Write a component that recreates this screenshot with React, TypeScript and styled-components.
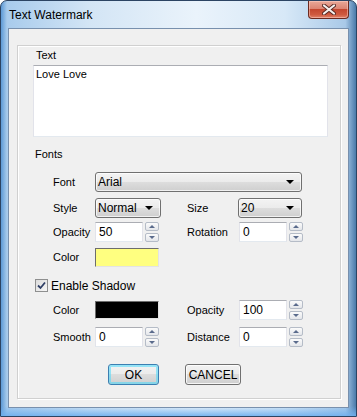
import React from 'react';
import styled, { createGlobalStyle } from 'styled-components';

const GlobalStyle = createGlobalStyle`
  html, body {
    margin: 0;
    padding: 0;
    background: #ffffff;
  }
  body {
    font-family: "Liberation Sans", Arial, sans-serif;
    font-size: 11px;
    color: #000;
  }
`;

const Window = styled.div`
  width: 357px;
  height: 417px;
  box-sizing: border-box;
  display: flex;
  flex-direction: column;
  border: 1px solid #2c4463;
  border-radius: 7px 7px 0 0;
  padding: 0 7px 8px 7px;
  background:
    linear-gradient(to bottom, rgba(111, 176, 238, 0) 0, rgba(111, 176, 238, 0) 405px, #6fb0ee 416px),
    linear-gradient(to right, #5d9ad6 0, #a8cbec 6px, #d3e5f5 25%, #eaf3fb 55%, #d7e8f7 80%, #a9c9e8 97%, #4a7aaa 100%);
  overflow: hidden;
`;

const TitleBar = styled.div`
  height: 27px;
  display: flex;
  align-items: flex-start;
  justify-content: space-between;
`;

const Title = styled.div`
  margin-top: 7px;
  padding-left: 1px;
  font-size: 12px;
  line-height: 14px;
  color: #000;
`;

const CloseButton = styled.div`
  width: 41px;
  height: 18px;
  box-sizing: border-box;
  border: 1px solid #6b2a20;
  border-top: none;
  border-radius: 0 0 4px 4px;
  background: linear-gradient(to bottom, #e9a898 0%, #dc8573 45%, #c4472f 50%, #cf5a40 80%, #e0836a 100%);
  display: flex;
  align-items: center;
  justify-content: center;
  box-shadow: inset 0 0 0 1px rgba(255, 210, 200, 0.5);
`;

const Client = styled.div`
  flex: 1;
  display: flex;
  border: 1px solid #7890ad;
  background: #f0f0f0;
  padding: 16px 7px 8px 8px;
`;

const Panel = styled.div`
  flex: 1;
  border: 1px solid #d0d0d0;
  box-shadow: inset 1px 1px 0 #ffffff, 1px 1px 0 #ffffff;
  padding: 3px 0 0 15px;
`;

const SectionLabel = styled.div<{ $top?: number; $left?: number }>`
  margin-top: ${p => p.$top ?? 0}px;
  margin-left: ${p => p.$left ?? 3}px;
  line-height: 13px;
`;

const TextBox = styled.div`
  margin-top: 3px;
  width: 295px;
  height: 72px;
  box-sizing: border-box;
  background: #fff;
  border: 1px solid #e2e3ea;
  border-top-color: #abadb3;
  border-bottom-color: #e3e9ef;
  padding: 2px 2px;
  line-height: 13px;
`;

const FieldRow = styled.div<{ $top: number; $height?: number }>`
  display: flex;
  align-items: center;
  height: ${p => p.$height ?? 20}px;
  margin-top: ${p => p.$top}px;
  margin-left: 20px;
`;

const Label = styled.div<{ $width: number }>`
  width: ${p => p.$width}px;
  flex-shrink: 0;
  line-height: 13px;
`;

const Cell = styled.div<{ $width: number }>`
  width: ${p => p.$width}px;
  flex-shrink: 0;
  display: flex;
  align-items: center;
`;

const SelectBox = styled.div<{ $width: number }>`
  width: ${p => p.$width}px;
  height: 20px;
  box-sizing: border-box;
  border: 1px solid #707070;
  border-radius: 3px;
  background: linear-gradient(to bottom, #f3f3f3 0%, #ebebeb 50%, #dddddd 50%, #cfcfcf 100%);
  box-shadow: inset 0 0 0 1px rgba(255, 255, 255, 0.7);
  display: flex;
  align-items: center;
  justify-content: space-between;
  padding: 0 7px 0 2px;
  font-size: 12px;
`;

const Arrow = styled.span`
  width: 0;
  height: 0;
  border-left: 4px solid transparent;
  border-right: 4px solid transparent;
  border-top: 4px solid #000;
`;

const Input = styled.div<{ $width: number }>`
  width: ${p => p.$width}px;
  height: 20px;
  box-sizing: border-box;
  background: #fff;
  border: 1px solid #e2e3ea;
  border-top-color: #abadb3;
  border-bottom-color: #e3e9ef;
  padding: 0 3px;
  display: flex;
  align-items: center;
  font-size: 12px;
`;

const SpinButtons = styled.div`
  margin-left: 2px;
  width: 14px;
  height: 20px;
  display: flex;
  flex-direction: column;
  justify-content: space-between;
`;

const SpinButton = styled.div<{ $down?: boolean }>`
  height: 9px;
  box-sizing: border-box;
  border: 1px solid #b5bcc7;
  border-radius: 2px;
  background: linear-gradient(to bottom, #fbfbfb, #e4e6ea);
  display: flex;
  align-items: center;
  justify-content: center;

  &::after {
    content: '';
    width: 0;
    height: 0;
    border-left: 3px solid transparent;
    border-right: 3px solid transparent;
    ${p => (p.$down ? 'border-top: 3px solid #5a6b8c;' : 'border-bottom: 3px solid #5a6b8c;')}
  }
`;

const Swatch = styled.div<{ $color: string; $height: number }>`
  width: 64px;
  height: ${p => p.$height}px;
  box-sizing: border-box;
  background: ${p => p.$color};
  border: 1px solid #e3e3e3;
  border-top-color: #6d6d6d;
  border-left-color: #6d6d6d;
`;

const CheckRow = styled.div`
  display: flex;
  align-items: center;
  margin-top: 12px;
  margin-left: 2px;
  height: 13px;
  gap: 3px;
  font-size: 12px;
`;

const CheckBox = styled.div`
  width: 13px;
  height: 13px;
  box-sizing: border-box;
  border: 1px solid #8e8f8f;
  background: linear-gradient(135deg, #dcdcdc, #f6f6f6);
  display: flex;
  align-items: center;
  justify-content: center;
`;

const ButtonRow = styled.div`
  display: flex;
  gap: 26px;
  margin-top: 17px;
  margin-left: 75px;
`;

const Button = styled.div<{ $width: number; $default?: boolean }>`
  width: ${p => p.$width}px;
  height: 21px;
  box-sizing: border-box;
  border: 1px solid ${p => (p.$default ? '#3c7fb1' : '#707070')};
  border-radius: 3px;
  background: linear-gradient(to bottom, #f2f2f2 0%, #ebebeb 50%, #dddddd 50%, #cfcfcf 100%);
  box-shadow: inset 0 0 0 ${p => (p.$default ? '2px rgba(72, 216, 251, 0.55)' : '1px rgba(255, 255, 255, 0.8)')};
  display: flex;
  align-items: center;
  justify-content: center;
  font-size: 12px;
`;

const Spin: React.FC<{ value: string }> = ({ value }) => (
  <>
    <Input $width={48}>{value}</Input>
    <SpinButtons>
      <SpinButton />
      <SpinButton $down />
    </SpinButtons>
  </>
);

const Select: React.FC<{ value: string; width: number }> = ({ value, width }) => (
  <SelectBox $width={width}>
    <span>{value}</span>
    <Arrow />
  </SelectBox>
);

export default function App() {
  return (
    <>
      <GlobalStyle />
      <Window>
        <TitleBar>
          <Title>Text Watermark</Title>
          <CloseButton>
            <svg width="14" height="11" viewBox="0 0 14 11">
              <path d="M2 1.5 L12 9.5 M12 1.5 L2 9.5" stroke="#5a2a24" strokeWidth="4" strokeLinecap="round" />
              <path d="M2 1.5 L12 9.5 M12 1.5 L2 9.5" stroke="#f4f0ee" strokeWidth="2.2" strokeLinecap="round" />
            </svg>
          </CloseButton>
        </TitleBar>
        <Client>
          <Panel>
            <SectionLabel>Text</SectionLabel>
            <TextBox>Love Love</TextBox>
            <SectionLabel $top={11} $left={2}>Fonts</SectionLabel>

            <FieldRow $top={11}>
              <Label $width={42}>Font</Label>
              <Select value="Arial" width={207} />
            </FieldRow>

            <FieldRow $top={6}>
              <Label $width={42}>Style</Label>
              <Cell $width={92}>
                <Select value="Normal" width={66} />
              </Cell>
              <Label $width={51}>Size</Label>
              <Select value="20" width={64} />
            </FieldRow>

            <FieldRow $top={4}>
              <Label $width={42}>Opacity</Label>
              <Cell $width={92}>
                <Spin value="50" />
              </Cell>
              <Label $width={52}>Rotation</Label>
              <Spin value="0" />
            </FieldRow>

            <FieldRow $top={5}>
              <Label $width={42}>Color</Label>
              <Swatch $color="#ffff80" $height={19} />
            </FieldRow>

            <CheckRow>
              <CheckBox>
                <svg width="9" height="9" viewBox="0 0 9 9">
                  <path d="M1 4.5 L3.5 7 L8 1.5" fill="none" stroke="#2f3f66" strokeWidth="1.8" />
                </svg>
              </CheckBox>
              <span>Enable Shadow</span>
            </CheckRow>

            <FieldRow $top={7} $height={22}>
              <Label $width={42}>Color</Label>
              <Cell $width={92}>
                <Swatch $color="#000000" $height={18} />
              </Cell>
              <Label $width={52}>Opacity</Label>
              <Spin value="100" />
            </FieldRow>

            <FieldRow $top={6}>
              <Label $width={42}>Smooth</Label>
              <Cell $width={92}>
                <Spin value="0" />
              </Cell>
              <Label $width={52}>Distance</Label>
              <Spin value="0" />
            </FieldRow>

            <ButtonRow>
              <Button $width={51} $default>OK</Button>
              <Button $width={56}>CANCEL</Button>
            </ButtonRow>
          </Panel>
        </Client>
      </Window>
    </>
  );
}
